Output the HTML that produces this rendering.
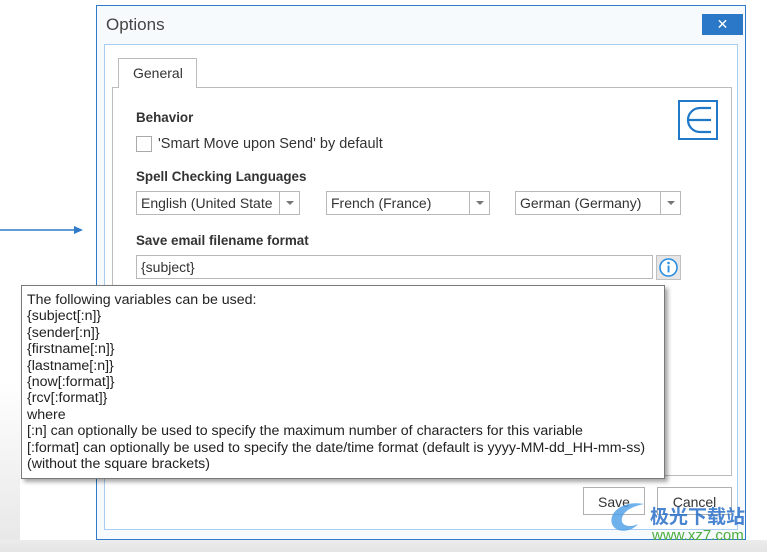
<!DOCTYPE html>
<html><head><meta charset="utf-8"><style>
*{margin:0;padding:0;box-sizing:border-box}
body{width:767px;height:552px;position:relative;overflow:hidden;background:#fff;font-family:"Liberation Sans",sans-serif;color:#333;font-size:14.5px}
.a{position:absolute}
.bot{left:0;top:540px;width:767px;height:12px;background:linear-gradient(#ececec,#e4e4e4)}
.lft{left:0;top:380px;width:20px;height:160px;background:linear-gradient(#fff,#e8e8e8)}
.dlg{left:96px;top:5px;width:650px;height:535px;border:1px solid #2f7bc8;background:#f7fafd}
.inner{left:104px;top:44px;width:634px;height:486px;border:1px solid #a9cdf0;background:#fff}
.tab{left:118px;top:58px;width:79px;height:30px;border:1px solid #bcbcbc;border-bottom:none;background:#fff;z-index:2;padding:6px 0 0 14px;font-size:14px}
.panel{left:112px;top:87px;width:620px;height:389px;border:1px solid #bcbcbc;background:#fff}
.b{font-weight:bold;font-size:13.4px;color:#333}
.dd{height:24px;border:1px solid #b8b8b8;background:#fff;padding:3px 4px;font-size:14px;white-space:nowrap;overflow:hidden}
.dd i{position:absolute;right:0;top:0;width:20px;height:22px;border-left:1px solid #b8b8b8;background:#fff}
.dd i:after{content:"";position:absolute;left:6px;top:9px;border:4px solid transparent;border-top:4px solid #777}
.btn{height:28px;border:1px solid #b0b0b0;background:#fff;text-align:center;padding-top:6px;font-size:14px}
.tip{left:21px;top:285px;width:644px;height:194px;border:1px solid #7a7a7a;background:#fff;box-shadow:3px 3px 4px rgba(0,0,0,.35);padding:6px 5px;font-size:14.2px;line-height:16.4px;color:#222;z-index:5;white-space:nowrap}
</style></head><body>
<div class="a lft"></div><div class="a bot"></div>
<svg class="a" style="left:0;top:224px" width="85" height="12"><line x1="0" y1="6" x2="76" y2="6" stroke="#2f7bc8" stroke-width="1.5"/><path d="M74 2 L83 6 L74 10Z" fill="#2f7bc8"/></svg>
<div class="a dlg"></div>
<div class="a" style="left:106px;top:15px;font-size:17px;color:#444">Options</div>
<div class="a" style="left:702px;top:14px;width:41px;height:21px;background:#2b78c8;color:#fff;text-align:center;font-size:14px;line-height:20px">✕</div>
<div class="a inner"></div>
<div class="a panel"></div>
<div class="a tab">General</div>
<div class="a b" style="left:136px;top:110px">Behavior</div>
<div class="a" style="left:136px;top:136px;width:16px;height:16px;border:1px solid #aaa"></div>
<div class="a" style="left:158px;top:136px">'Smart Move upon Send' by default</div>
<svg class="a" style="left:678px;top:100px" width="40" height="40"><rect x="1" y="1" width="38" height="38" fill="none" stroke="#1f78c8" stroke-width="2"/><path d="M33 8 H22 A12 12 0 0 0 22 32 H33 M9 20 H33" fill="none" stroke="#1f78c8" stroke-width="2.2"/></svg>
<div class="a b" style="left:136px;top:169px">Spell Checking Languages</div>
<div class="a dd" style="left:136px;top:191px;width:164px">English (United State<i></i></div>
<div class="a dd" style="left:326px;top:191px;width:164px">French (France)<i></i></div>
<div class="a dd" style="left:515px;top:191px;width:166px">German (Germany)<i></i></div>
<div class="a b" style="left:136px;top:233px">Save email filename format</div>
<div class="a dd" style="left:136px;top:255px;width:517px">{subject}</div>
<div class="a" style="left:656px;top:255px;width:25px;height:25px;border:1px solid #c0c0c0;background:#e6e6e6"></div>
<svg class="a" style="left:658px;top:257px" width="21" height="21"><circle cx="10.5" cy="10.5" r="8.5" fill="#fff" stroke="#2b8ee0" stroke-width="1.6"/><circle cx="10.5" cy="6" r="1.3" fill="#2b8ee0"/><rect x="9.6" y="8.6" width="1.9" height="6.8" fill="#2b8ee0"/></svg>
<div class="a tip">The following variables can be used:<br>{subject[:n]}<br>{sender[:n]}<br>{firstname[:n]}<br>{lastname[:n]}<br>{now[:format]}<br>{rcv[:format]}<br>where<br>[:n] can optionally be used to specify the maximum number of characters for this variable<br>[:format] can optionally be used to specify the date/time format (default is yyyy-MM-dd_HH-mm-ss)<br>(without the square brackets)</div>
<div class="a btn" style="left:583px;top:487px;width:62px">Save</div>
<div class="a btn" style="left:657px;top:487px;width:75px">Cancel</div>
<div class="a" style="left:650px;top:502px;font-size:19px;font-weight:bold;color:#2a6fc9;font-family:'Noto Sans CJK SC',sans-serif;opacity:.85">极光下载站</div>
<div class="a" style="left:652px;top:527px;font-size:15px;color:#4cae3c">www.xz7.com</div>
<svg class="a" style="left:604px;top:498px" width="46" height="40"><path d="M40 6 C20 2 4 14 8 26 C12 36 28 34 34 26 C26 30 16 28 18 20 C20 12 30 8 40 6Z" fill="#4a9ee6" opacity=".8"/></svg>
</body></html>
